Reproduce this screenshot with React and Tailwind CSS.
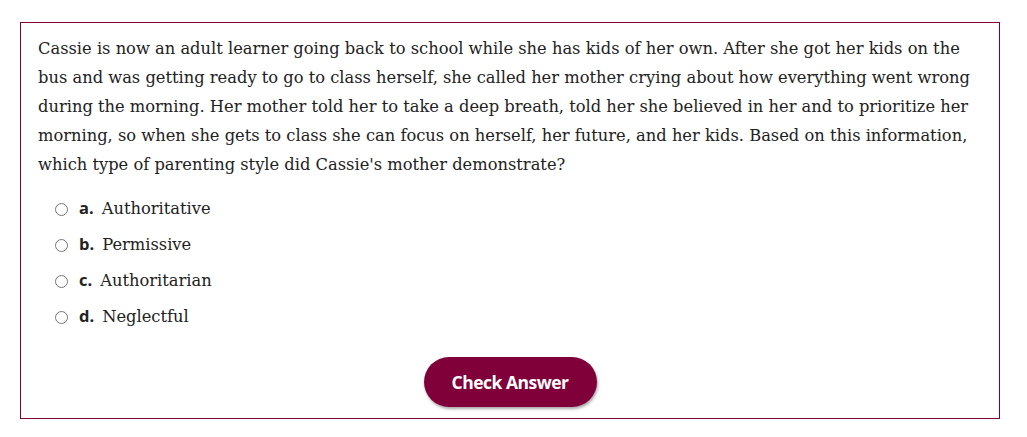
export default function App() {
  const lines = [
    'Cassie is now an adult learner going back to school while she has kids of her own. After she got her kids on the',
    'bus and was getting ready to go to class herself, she called her mother crying about how everything went wrong',
    'during the morning. Her mother told her to take a deep breath, told her she believed in her and to prioritize her',
    'morning, so when she gets to class she can focus on herself, her future, and her kids. Based on this information,',
    "which type of parenting style did Cassie's mother demonstrate?",
  ];
  const options = [
    { key: 'a.', text: 'Authoritative' },
    { key: 'b.', text: 'Permissive' },
    { key: 'c.', text: 'Authoritarian' },
    { key: 'd.', text: 'Neglectful' },
  ];

  return (
    <div className="w-[1027px] h-[437px] bg-white pt-[22px] pl-[20px]">
      <div className="w-[980px] h-[397px] border border-[#80003a] pt-[11px] px-[17px]">
        <div className="font-['DejaVu_Serif',serif] text-[16.3px] leading-[29px] text-[#222]">
          {lines.map((l) => (
            <div key={l} className="whitespace-nowrap">{l}</div>
          ))}
        </div>

        <div className="mt-[12px] pl-[17px]">
          {options.map((o) => (
            <label key={o.key} className="flex items-center h-[36px]">
              <span className="w-[13px] h-[13px] rounded-full border border-[#767676] bg-white" />
              <span className="flex items-baseline">
                <span className="ml-[11px] font-['Open_Sans',sans-serif] font-bold text-[16.5px] text-[#222]">{o.key}</span>
                <span className="ml-[8px] font-['DejaVu_Serif',serif] text-[16.3px] text-[#222]">{o.text}</span>
              </span>
            </label>
          ))}
        </div>

        <div className="flex justify-center mt-[22px]">
          <button className="w-[173px] h-[50px] rounded-full bg-[#80003a] text-white font-['Open_Sans',sans-serif] font-bold text-[17.5px] tracking-[-0.5px] shadow-[1px_2px_3px_rgba(0,0,0,0.35)]">
            Check Answer
          </button>
        </div>
      </div>
    </div>
  );
}
